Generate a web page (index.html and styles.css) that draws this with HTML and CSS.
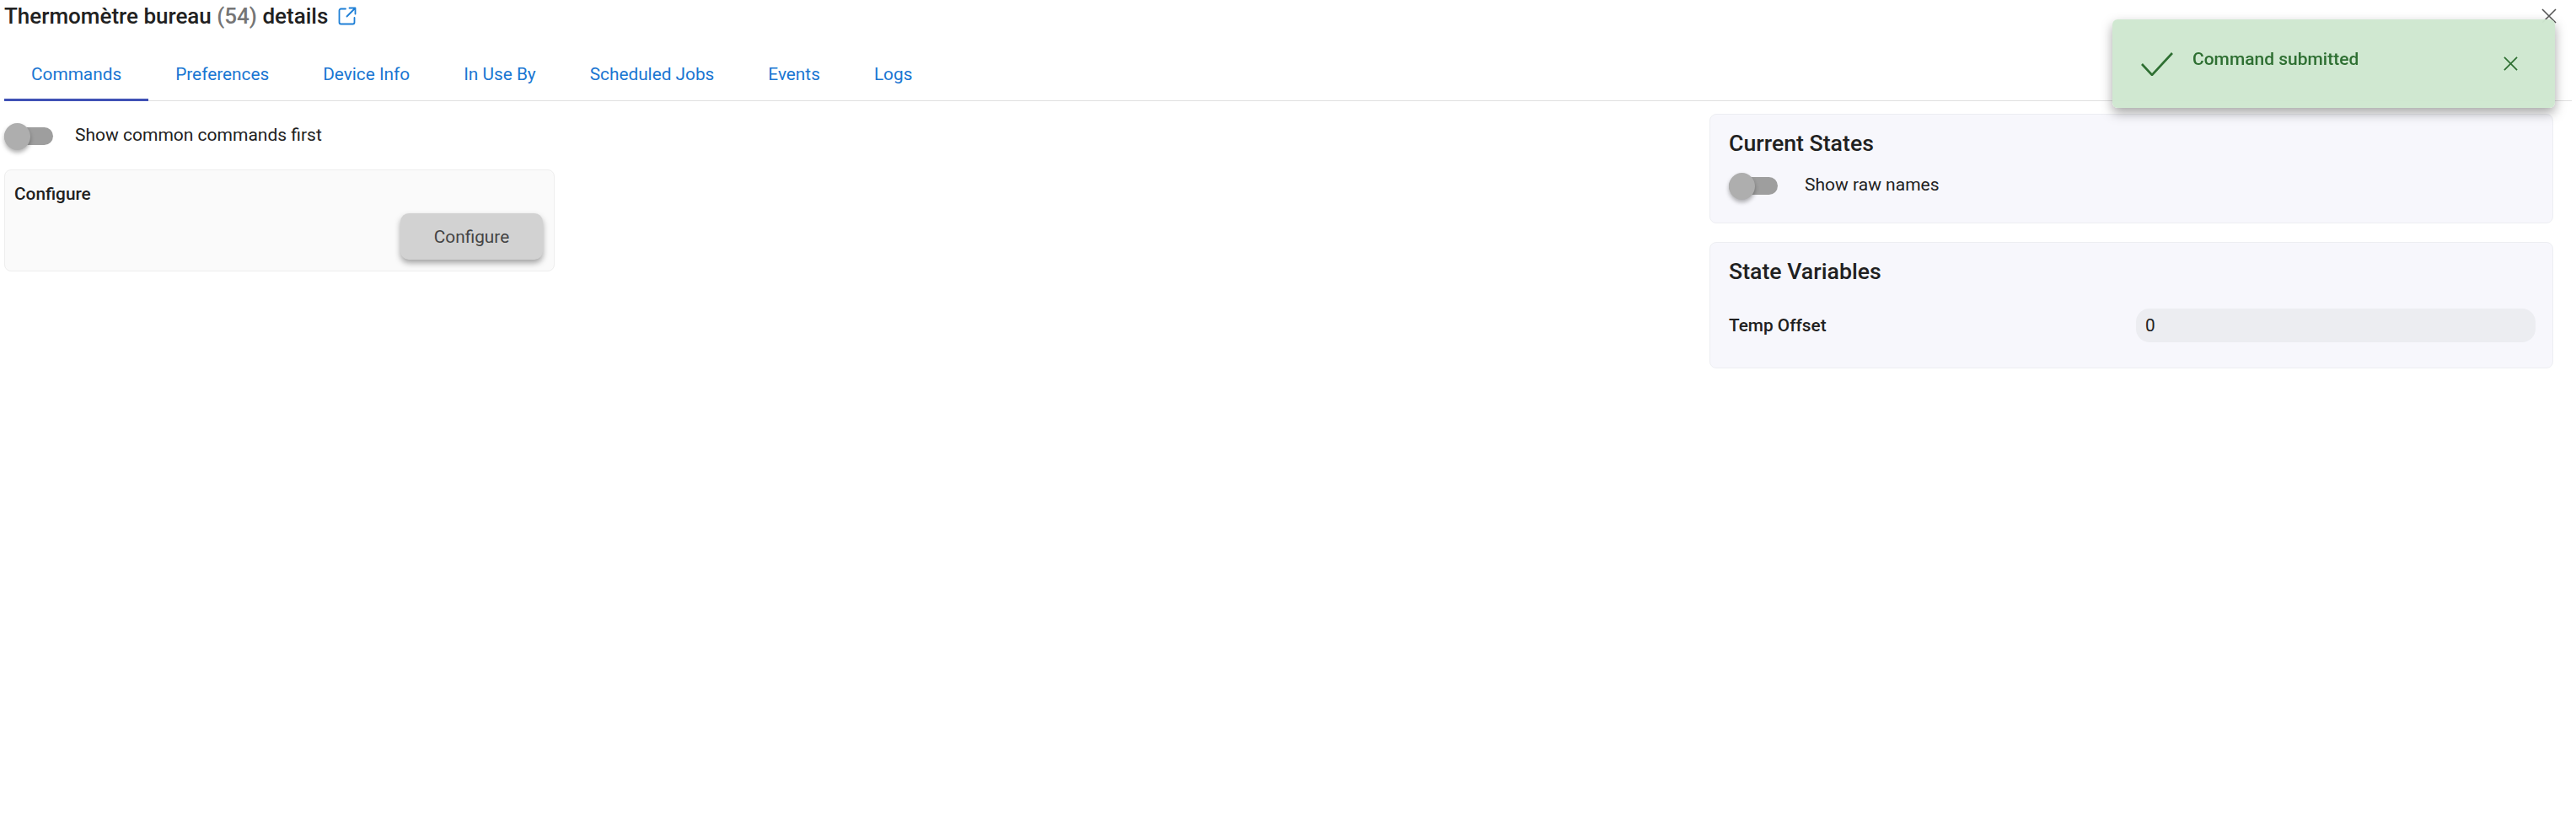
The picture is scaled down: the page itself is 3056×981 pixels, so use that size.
FILE: index.html
```html
<!DOCTYPE html>
<html lang="en">
<head>
<meta charset="utf-8">
<title>Thermomètre bureau (54) details</title>
<link rel="stylesheet" href="styles.css">
</head>
<body>
<div class="page">
  <header class="header">
    <h1 class="title">Thermomètre bureau <span class="title-id">(54)</span> details</h1>
    <svg class="ext-icon" viewBox="0 0 22 22" fill="none" stroke="#1e7fd6" stroke-width="1.8" stroke-linecap="round" stroke-linejoin="round">
      <path d="M9 2.5H3.5a2 2 0 0 0-2 2v14a2 2 0 0 0 2 2h14a2 2 0 0 0 2-2V13"/>
      <path d="M13.5 1.5h7v7M20.5 1.5 10.5 11.5"/>
    </svg>
    <svg class="close-icon" viewBox="0 0 18 18" fill="none" stroke="#555" stroke-width="1.6">
      <path d="M1 1 17 17M17 1 1 17"/>
    </svg>
  </header>
  <nav class="tabs">
    <a class="tab tab-active">Commands</a>
    <a class="tab">Preferences</a>
    <a class="tab">Device Info</a>
    <a class="tab">In Use By</a>
    <a class="tab">Scheduled Jobs</a>
    <a class="tab">Events</a>
    <a class="tab">Logs</a>
  </nav>
  <main class="content">
    <section class="left">
      <div class="switch-row">
        <span class="switch"><span class="switch-thumb"></span></span>
        <span class="switch-label">Show common commands first</span>
      </div>
      <div class="command-card">
        <div class="command-name">Configure</div>
        <div class="command-actions"><button class="command-btn">Configure</button></div>
      </div>
    </section>
    <section class="right">
      <div class="panel panel-states">
        <h2 class="panel-title">Current States</h2>
        <div class="switch-row switch-row-panel">
          <span class="switch"><span class="switch-thumb"></span></span>
          <span class="switch-label">Show raw names</span>
        </div>
      </div>
      <div class="panel panel-vars">
        <h2 class="panel-title">State Variables</h2>
        <div class="var-row">
          <span class="var-name">Temp Offset</span>
          <span class="var-value">0</span>
        </div>
      </div>
    </section>
  </main>
</div>
<div class="toast">
  <svg class="toast-check" viewBox="0 0 38 28" fill="none" stroke="#2e6f32" stroke-width="2.6">
    <path d="M1 14 13 27 37 1"/>
  </svg>
  <span class="toast-text">Command submitted</span>
  <svg class="toast-close" viewBox="0 0 18 18" fill="none" stroke="#2e6f32" stroke-width="1.8">
    <path d="M1 1 17 17M17 1 1 17"/>
  </svg>
</div>
</body>
</html>
```
FILE: styles.css
```css
html, body {
  margin: 0;
  background: #fff;
  font-family: Roboto, "Liberation Sans", sans-serif;
  color: #212121;
}

.page {
  padding: 0 5px;
}

.header {
  display: flex;
  align-items: flex-start;
  height: 56px;
  padding-right: 18px;
}

.title {
  margin: 0;
  font-size: 26px;
  line-height: 38px;
  font-weight: 500;
}

.title-id {
  color: #757575;
}

.ext-icon {
  width: 22px;
  height: 22px;
  margin: 8px 0 0 12px;
}

.close-icon {
  width: 18px;
  height: 18px;
  margin: 10px 0 0 auto;
}

.tabs {
  display: flex;
  height: 63px;
  border-bottom: 1px solid #e0e0e0;
}

.tab {
  display: flex;
  align-items: center;
  padding: 0 32px;
  font-size: 20.8px;
  color: #1976d2;
  box-sizing: border-box;
  height: 64px;
}

.tab-active {
  border-bottom: 3px solid #3f51b5;
  padding-top: 3px;
}

.content {
  display: flex;
  justify-content: space-between;
  padding-right: 22px;
}

.left {
  width: 653px;
  padding-top: 25px;
}

.right {
  width: 1001px;
  padding-top: 15px;
}

.switch-row {
  display: flex;
  align-items: center;
  height: 32px;
}

.switch {
  position: relative;
  display: block;
  width: 58px;
  height: 21px;
  border-radius: 11px;
  background: #9e9e9e;
}

.switch-thumb {
  position: absolute;
  left: 0;
  top: -5px;
  width: 31px;
  height: 32px;
  border-radius: 50%;
  background: #aeaeae;
  box-shadow: 0 3px 5px rgba(0, 0, 0, 0.3);
}

.switch-label {
  margin: 0 0 2px 26px;
  font-size: 21px;
}

.switch-row-panel .switch-label {
  margin: 0 0 3px 32px;
}

.command-card {
  margin-top: 24px;
  height: 121px;
  box-sizing: border-box;
  padding: 15px 13px 0 11px;
  background: #fafafa;
  border: 1px solid #eeeeee;
  border-radius: 8px;
}

.command-name {
  font-size: 20.8px;
  line-height: 26px;
  font-weight: 500;
}

.command-actions {
  display: flex;
  justify-content: flex-end;
  margin-top: 10px;
}

.command-btn {
  width: 169px;
  height: 55px;
  border: 0;
  border-radius: 10px;
  background: #d2d2d2;
  color: #444;
  font: 400 20.8px Roboto, sans-serif;
  box-shadow: 0 4px 7px rgba(0, 0, 0, 0.35);
}

.panel {
  box-sizing: border-box;
  padding: 17px 20px 0 22px;
  background: #f7f7fc;
  border: 1px solid #edeef2;
  border-radius: 8px;
}

.panel-states {
  height: 130px;
}

.panel-vars {
  height: 150px;
  margin-top: 22px;
}

.panel-title {
  margin: 0;
  font-size: 26.7px;
  line-height: 34px;
  font-weight: 500;
}

.switch-row-panel {
  margin-top: 17px;
  height: 33px;
}

.var-row {
  display: flex;
  align-items: center;
  justify-content: space-between;
  margin-top: 27px;
}

.var-name {
  font-size: 20.8px;
  font-weight: 500;
}

.var-value {
  box-sizing: border-box;
  width: 474px;
  height: 40px;
  padding-left: 11px;
  border-radius: 16px;
  background: #ecedf1;
  font-size: 20.8px;
  line-height: 40px;
}

.toast {
  position: fixed;
  top: 23px;
  right: 25px;
  display: flex;
  align-items: center;
  box-sizing: border-box;
  width: 525px;
  height: 105px;
  padding: 0 44px 0 34px;
  border-radius: 6px;
  background: rgba(206, 231, 207, 0.97);
  box-shadow: 0 6px 14px rgba(0, 0, 0, 0.35);
}

.toast-check {
  width: 38px;
  height: 28px;
}

.toast-text {
  margin: 0 0 11px 23px;
  font-size: 21px;
  font-weight: 500;
  color: #2e6f32;
}

.toast-close {
  width: 17px;
  height: 17px;
  margin-left: auto;
}
```
